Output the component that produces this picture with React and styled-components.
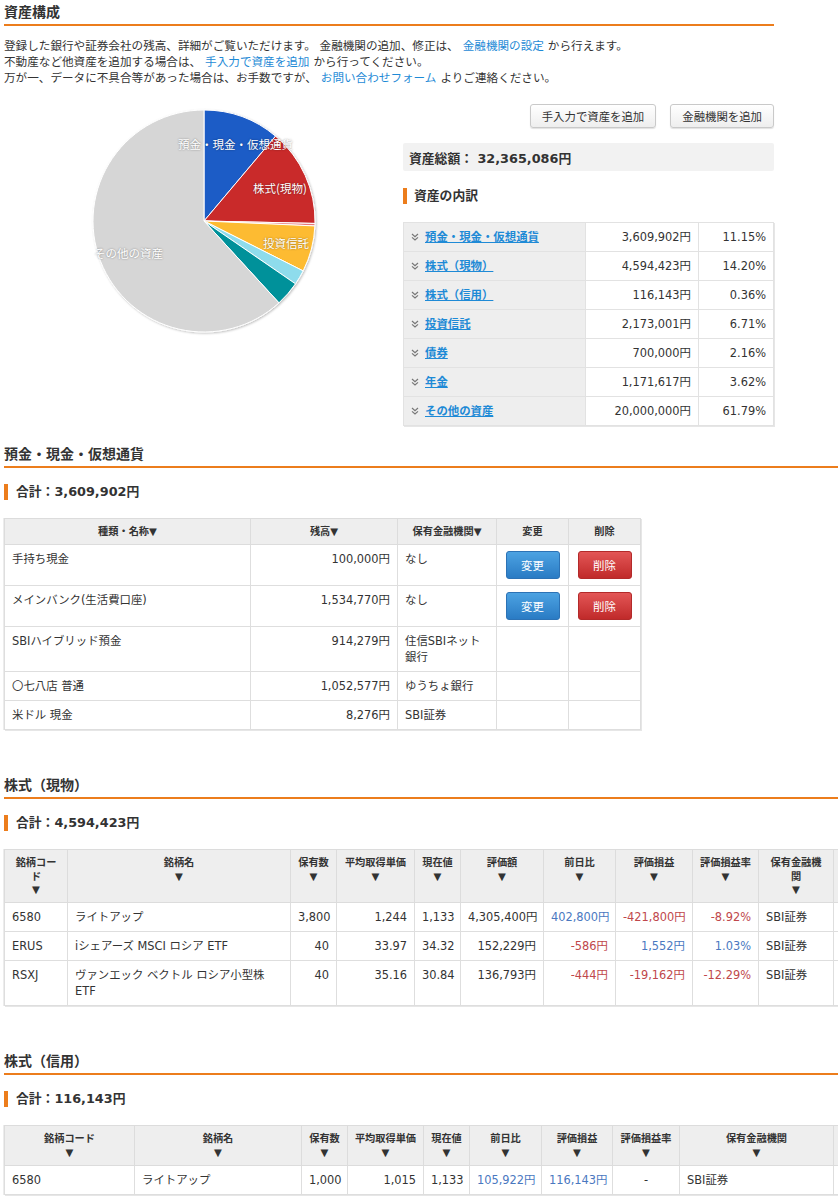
import React from "react";
import styled, { createGlobalStyle, css } from "styled-components";

const ORANGE = "#ec7d1c";
const BLUE_LINK = "#1e8ad6";

const GlobalStyle = createGlobalStyle`
  html, body { margin: 0; padding: 0; background: #fff; overflow-x: hidden; }
  body {
    font-family: "DejaVu Sans", "Noto Sans CJK JP", sans-serif;
    font-size: 11.4px;
    color: #333;
  }
`;

const Page = styled.div`
  width: 900px;
  padding: 0 0 40px 4px;
`;

const Section = styled.section`
  margin-top: ${props => props.$gap || 0}px;
`;

const SectionTitle = styled.h2`
  margin: 0;
  padding: 2px 0 4px;
  width: ${props => props.$width || "auto"};
  font-family: "Noto Sans CJK JP", sans-serif;
  font-size: 14px;
  line-height: 18px;
  font-weight: bold;
  color: #333;
  border-bottom: 2px solid ${ORANGE};
`;

const Intro = styled.div`
  margin-top: 12px;
  font-size: 11.6px;
  line-height: 16px;
`;

const TextLink = styled.a`
  color: ${BLUE_LINK};
  text-decoration: none;
  margin: 0 4px;
`;

const Overview = styled.div`
  display: flex;
  width: 770px;
  margin-top: 18px;
`;

const ChartBox = styled.div`
  flex: none;
  width: 399px;
  height: 240px;
`;

const SidePanel = styled.div`
  flex: none;
  width: 371px;
  display: flex;
  flex-direction: column;
`;

const ButtonRow = styled.div`
  display: flex;
  justify-content: flex-end;
  gap: 14px;
`;

const GrayButton = styled.button`
  height: 24px;
  padding: 0 11px;
  border: 1px solid #c9c9c9;
  border-radius: 3px;
  background: linear-gradient(#ffffff, #eeeeee);
  box-shadow: 0 1px 1px rgba(0, 0, 0, 0.12);
  font-family: inherit;
  font-size: 11.4px;
  color: #333;
`;

const TotalBox = styled.div`
  margin-top: 15px;
  height: 28px;
  padding-left: 6px;
  display: flex;
  align-items: center;
  background: #f2f2f2;
  border-radius: 2px;
  font-size: 12.8px;
  font-weight: bold;
`;

const SubTitle = styled.div`
  margin-top: ${props => props.$gap || 16}px;
  display: flex;
  align-items: center;
  gap: ${props => props.$inner || 8}px;
  font-size: 12.8px;
  line-height: 16px;
  font-weight: bold;
  &::before {
    content: "";
    width: 4px;
    height: 16px;
    background: ${ORANGE};
  }
`;

const Breakdown = styled.table`
  margin-top: 18px;
  width: 370px;
  border-collapse: collapse;
  border: 1px solid #dcdcdc;
  box-shadow: 1px 1px 0 #e6e6e6;
  table-layout: fixed;
`;

const BdCell = styled.td`
  padding: 6px 7px;
  line-height: 16px;
  border: 1px solid #e2e2e2;
  text-align: ${props => props.$align || "left"};
  background: ${props => (props.$label ? "#eeeeee" : "#fff")};
  white-space: nowrap;
`;

const LabelWrap = styled.div`
  display: flex;
  align-items: center;
  gap: 6px;
  height: 16px;
`;

const BdLink = styled.a`
  color: ${BLUE_LINK};
  font-weight: bold;
  text-decoration: underline;
`;

const DataTable = styled.table`
  margin-top: 18px;
  width: ${props => props.$width}px;
  border-collapse: collapse;
  table-layout: fixed;
  border: 1px solid #d6d6d6;
  box-shadow: 1px 1px 0 #e6e6e6, -1px 0 0 #ececec;
`;

const Th = styled.th`
  padding: 6px 6.7px 5.5px;
  line-height: 13.5px;
  font-size: 10.2px;
  font-weight: bold;
  color: #333;
  background: #eeeeee;
  border: 1px solid #dcdcdc;
  text-align: center;
  vertical-align: top;
`;

const toneColor = {
  up: "#4a78bf",
  down: "#c0474b",
};

const Td = styled.td`
  padding: 6px 7px;
  line-height: 16px;
  border: 1px solid #dedede;
  vertical-align: top;
  text-align: ${props => props.$align || "left"};
  white-space: ${props => (props.$align ? "nowrap" : "normal")};
  color: ${props => toneColor[props.$tone] || "#333"};
`;

const ActionButton = styled.button`
  display: block;
  margin: 0 auto;
  width: 54px;
  height: 28px;
  border-radius: 3px;
  font-family: inherit;
  font-size: 11.4px;
  color: #fff;
  ${props =>
    props.$danger
      ? css`
          border: 1px solid #b32a2a;
          background: linear-gradient(#e35656, #c02a2a);
        `
      : css`
          border: 1px solid #2c72b5;
          background: linear-gradient(#4ca2e2, #2a7bc4);
        `}
`;

const SLICES = [
  { pct: 11.15, color: "#1f5bc6" },
  { pct: 14.2, color: "#c9292b" },
  { pct: 0.36, color: "#e7797b" },
  { pct: 6.71, color: "#fdbb30" },
  { pct: 2.16, color: "#8edcec" },
  { pct: 3.62, color: "#00919a" },
  { pct: 61.8, color: "#d6d6d6" },
];

function slicePath(cx, cy, r, a0, a1) {
  const p = a => [cx + r * Math.sin(a), cy - r * Math.cos(a)];
  const [x0, y0] = p(a0);
  const [x1, y1] = p(a1);
  const large = a1 - a0 > Math.PI ? 1 : 0;
  return `M${cx} ${cy} L${x0.toFixed(2)} ${y0.toFixed(2)} A${r} ${r} 0 ${large} 1 ${x1.toFixed(2)} ${y1.toFixed(2)} Z`;
}

const labelStyle = {
  fill: "#fff",
  fontSize: 11.5,
  fontFamily: '"Noto Sans CJK JP", sans-serif',
  textShadow: "0 0 2px rgba(0,0,0,0.45)",
};

function PieChart() {
  const cx = 200;
  const cy = 117;
  const r = 111;
  let acc = 0;
  const paths = SLICES.map((s, i) => {
    const a0 = (acc / 100) * Math.PI * 2;
    acc += s.pct;
    const a1 = (Math.min(acc, 100) / 100) * Math.PI * 2;
    return <path key={i} d={slicePath(cx, cy, r, a0, a1)} fill={s.color} stroke="#fff" strokeWidth="1" />;
  });
  return (
    <svg width="399" height="240" viewBox="0 0 399 240">
      <defs>
        <clipPath id="pieclip">
          <rect x="89" y="0" width="310" height="240" />
        </clipPath>
        <filter id="pieshadow" x="-10%" y="-10%" width="120%" height="120%">
          <feDropShadow dx="1" dy="1" stdDeviation="1" floodColor="#000" floodOpacity="0.25" />
        </filter>
      </defs>
      <g filter="url(#pieshadow)">{paths}</g>
      <g clipPath="url(#pieclip)" dominantBaseline="central">
        <text x="174" y="40" style={labelStyle}>預金・現金・仮想通貨</text>
        <text x="249" y="84" style={labelStyle}>株式(現物)</text>
        <text x="259" y="139" style={labelStyle}>投資信託</text>
        <text x="159" y="149" textAnchor="end" style={labelStyle}>その他の資産</text>
      </g>
    </svg>
  );
}

function Chevrons() {
  return (
    <svg width="8" height="8" viewBox="0 0 8 8">
      <path d="M1 1 L4 3.6 L7 1 M1 4.4 L4 7 L7 4.4" fill="none" stroke="#777" strokeWidth="1.2" />
    </svg>
  );
}

const breakdown = [
  ["預金・現金・仮想通貨", "3,609,902円", "11.15%"],
  ["株式（現物）", "4,594,423円", "14.20%"],
  ["株式（信用）", "116,143円", "0.36%"],
  ["投資信託", "2,173,001円", "6.71%"],
  ["債券", "700,000円", "2.16%"],
  ["年金", "1,171,617円", "3.62%"],
  ["その他の資産", "20,000,000円", "61.79%"],
];

const deposits = [
  { name: "手持ち現金", amount: "100,000円", bank: "なし", editable: true },
  { name: "メインバンク(生活費口座)", amount: "1,534,770円", bank: "なし", editable: true },
  { name: "SBIハイブリッド預金", amount: "914,279円", bank: "住信SBIネット銀行" },
  { name: "〇七八店 普通", amount: "1,052,577円", bank: "ゆうちょ銀行" },
  { name: "米ドル 現金", amount: "8,276円", bank: "SBI証券" },
];

const spotStocks = [
  ["6580", "ライトアップ", "3,800", "1,244", "1,133", "4,305,400円", ["402,800円", "up"], ["-421,800円", "down"], ["-8.92%", "down"]],
  ["ERUS", "iシェアーズ MSCI ロシア ETF", "40", "33.97", "34.32", "152,229円", ["-586円", "down"], ["1,552円", "up"], ["1.03%", "up"]],
  ["RSXJ", "ヴァンエック ベクトル ロシア小型株 ETF", "40", "35.16", "30.84", "136,793円", ["-444円", "down"], ["-19,162円", "down"], ["-12.29%", "down"]],
];

const depositCols = [246, 147, 99, 72, 72];
const spotCols = [63, 223, 46, 78, 46, 83, 72, 77, 66, 75, 60];
const spotHeads = ["銘柄コード", "銘柄名", "保有数", "平均取得単価", "現在値", "評価額", "前日比", "評価損益", "評価損益率", "保有金融機関"];

const marginCols = [130, 167, 46, 76, 46, 72, 71, 67, 154, 60];
const marginHeads = ["銘柄コード", "銘柄名", "保有数", "平均取得単価", "現在値", "前日比", "評価損益", "評価損益率", "保有金融機関"];

const sum = list => list.reduce((a, b) => a + b, 0);

function SortHead({ label }) {
  return (
    <Th>
      {label}
      <br />▼
    </Th>
  );
}

function ColGroup({ widths }) {
  return (
    <colgroup>
      {widths.map((w, i) => (
        <col key={i} style={{ width: w }} />
      ))}
    </colgroup>
  );
}

export default function App() {
  return (
    <Page>
      <GlobalStyle />

      <Section>
        <SectionTitle $width="770px">資産構成</SectionTitle>
        <Intro>
          <div>
            登録した銀行や証券会社の残高、詳細がご覧いただけます。 金融機関の追加、修正は、
            <TextLink href="#">金融機関の設定</TextLink>から行えます。
          </div>
          <div>
            不動産など他資産を追加する場合は、
            <TextLink href="#">手入力で資産を追加</TextLink>から行ってください。
          </div>
          <div>
            万が一、データに不具合等があった場合は、お手数ですが、
            <TextLink href="#">お問い合わせフォーム</TextLink>よりご連絡ください。
          </div>
        </Intro>

        <Overview>
          <ChartBox>
            <PieChart />
          </ChartBox>
          <SidePanel>
            <ButtonRow>
              <GrayButton>手入力で資産を追加</GrayButton>
              <GrayButton>金融機関を追加</GrayButton>
            </ButtonRow>
            <TotalBox>資産総額： 32,365,086円</TotalBox>
            <SubTitle $gap={17} $inner={7}>資産の内訳</SubTitle>
            <Breakdown>
              <colgroup>
                <col style={{ width: 182 }} />
                <col style={{ width: 113 }} />
                <col style={{ width: 75 }} />
              </colgroup>
              <tbody>
                {breakdown.map(([label, amount, pct]) => (
                  <tr key={label}>
                    <BdCell $label>
                      <LabelWrap>
                        <Chevrons />
                        <BdLink href="#">{label}</BdLink>
                      </LabelWrap>
                    </BdCell>
                    <BdCell $align="right">{amount}</BdCell>
                    <BdCell $align="right">{pct}</BdCell>
                  </tr>
                ))}
              </tbody>
            </Breakdown>
          </SidePanel>
        </Overview>
      </Section>

      <Section $gap={16}>
        <SectionTitle>預金・現金・仮想通貨</SectionTitle>
        <SubTitle>合計：3,609,902円</SubTitle>
        <DataTable $width={sum(depositCols)}>
          <ColGroup widths={depositCols} />
          <thead>
            <tr>
              <Th>種類・名称▼</Th>
              <Th>残高▼</Th>
              <Th>保有金融機関▼</Th>
              <Th>変更</Th>
              <Th>削除</Th>
            </tr>
          </thead>
          <tbody>
            {deposits.map(d => (
              <tr key={d.name}>
                <Td>{d.name}</Td>
                <Td $align="right">{d.amount}</Td>
                <Td>{d.bank}</Td>
                <Td>{d.editable && <ActionButton>変更</ActionButton>}</Td>
                <Td>{d.editable && <ActionButton $danger>削除</ActionButton>}</Td>
              </tr>
            ))}
          </tbody>
        </DataTable>
      </Section>

      <Section $gap={43}>
        <SectionTitle>株式（現物）</SectionTitle>
        <SubTitle>合計：4,594,423円</SubTitle>
        <DataTable $width={sum(spotCols)}>
          <ColGroup widths={spotCols} />
          <thead>
            <tr>
              {spotHeads.map(h => (
                <SortHead key={h} label={h} />
              ))}
              <Th />
            </tr>
          </thead>
          <tbody>
            {spotStocks.map(row => (
              <tr key={row[0]}>
                <Td>{row[0]}</Td>
                <Td>{row[1]}</Td>
                <Td $align="right">{row[2]}</Td>
                <Td $align="right">{row[3]}</Td>
                <Td $align="right">{row[4]}</Td>
                <Td $align="right">{row[5]}</Td>
                <Td $align="right" $tone={row[6][1]}>{row[6][0]}</Td>
                <Td $align="right" $tone={row[7][1]}>{row[7][0]}</Td>
                <Td $align="right" $tone={row[8][1]}>{row[8][0]}</Td>
                <Td>SBI証券</Td>
                <Td />
              </tr>
            ))}
          </tbody>
        </DataTable>
      </Section>

      <Section $gap={43}>
        <SectionTitle>株式（信用）</SectionTitle>
        <SubTitle>合計：116,143円</SubTitle>
        <DataTable $width={sum(marginCols)}>
          <ColGroup widths={marginCols} />
          <thead>
            <tr>
              {marginHeads.map(h => (
                <SortHead key={h} label={h} />
              ))}
              <Th />
            </tr>
          </thead>
          <tbody>
            <tr>
              <Td>6580</Td>
              <Td>ライトアップ</Td>
              <Td $align="right">1,000</Td>
              <Td $align="right">1,015</Td>
              <Td $align="right">1,133</Td>
              <Td $align="right" $tone="up">105,922円</Td>
              <Td $align="right" $tone="up">116,143円</Td>
              <Td $align="center">-</Td>
              <Td>SBI証券</Td>
              <Td />
            </tr>
          </tbody>
        </DataTable>
      </Section>
    </Page>
  );
}
